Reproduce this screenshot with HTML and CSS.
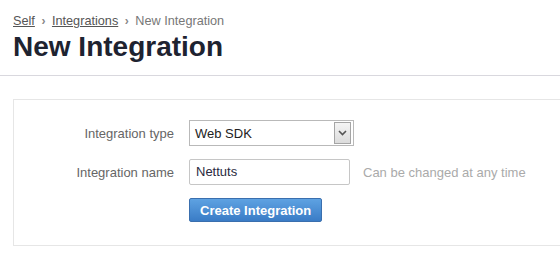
FILE: index.html
```html
<!DOCTYPE html>
<html lang="en">

<head>
    <meta charset="UTF-8">
    <title>New Integration</title>
    <link rel="stylesheet" href="styles.css">
</head>

<body>
    <header class="page-header">
        <div class="crumbs">
            <a href="#">Self</a>
            <span class="sep">›</span>
            <a href="#">Integrations</a>
            <span class="sep">›</span>
            <span class="current">New Integration</span>
        </div>
        <h1>New Integration</h1>
    </header>

    <section class="card">
        <form class="form">
            <div class="row">
                <label class="label">Integration type</label>
                <div class="select">
                    <span class="select-value">Web SDK</span>
                    <span class="select-btn">
                        <svg width="9" height="6" viewBox="0 0 9 6">
                            <path d="M1 1 L4.5 4.5 L8 1" fill="none" stroke="#555" stroke-width="1.6" />
                        </svg>
                    </span>
                </div>
            </div>
            <div class="row">
                <label class="label">Integration name</label>
                <div class="input">Nettuts</div>
                <span class="help">Can be changed at any time</span>
            </div>
            <div class="row">
                <span class="label"></span>
                <button type="button" class="btn">Create Integration</button>
            </div>
        </form>
    </section>
</body>

</html>
```

FILE: styles.css
```css
body {
    margin: 0;
    padding: 0;
    background-color: #ffffff;
    font-family: Arial, "Liberation Sans", sans-serif;
    color: #333;
}

.page-header {
    padding: 13px 13px 0 13px;
    height: 62px;
    border-bottom: 1px solid #d9d8de;
}

.crumbs {
    font-size: 12.7px;
    color: #777;
    line-height: 17px;
}

.crumbs a {
    color: #555;
    text-decoration: underline;
}

.sep {
    font-size: 12px;
    font-weight: bold;
    color: #888;
    margin: 0 3px;
}

.page-header h1 {
    margin: 1px 0 0 0;
    font-size: 28px;
    line-height: 32px;
    font-weight: bold;
    color: #1e2330;
}

.card {
    margin: 23px 0 0 13px;
    height: 145px;
    border: 1px solid #e6e6e6;
    border-right: none;
}

.form {
    padding-top: 20px;
    display: flex;
    flex-direction: column;
    gap: 13px;
}

.row {
    display: flex;
    align-items: center;
}

.label {
    width: 160px;
    text-align: right;
    font-size: 13px;
    color: #666;
    margin-right: 15px;
}

.select {
    width: 163px;
    height: 24px;
    border: 1px solid #b9b9b9;
    display: flex;
    align-items: center;
    justify-content: space-between;
    font-size: 13px;
    color: #222;
}

.select-value {
    padding-left: 5px;
}

.select-btn {
    width: 15px;
    height: 20px;
    margin-right: 2px;
    border: 1px solid #a5a5a5;
    background: linear-gradient(#f4f4f4, #dcdcdc);
    display: flex;
    align-items: center;
    justify-content: center;
}

.input {
    width: 153px;
    height: 24px;
    line-height: 24px;
    padding-left: 6px;
    border: 1px solid #c6c6c6;
    border-radius: 2px;
    font-size: 13px;
    color: #2a2a40;
}

.help {
    margin-left: 13px;
    font-size: 13px;
    color: #aaa;
}

.btn {
    height: 24px;
    padding: 0 10px;
    font-family: Arial, "Liberation Sans", sans-serif;
    font-size: 13px;
    font-weight: bold;
    color: #fff;
    background: linear-gradient(#5ea2e2, #3a7cc6);
    border: 1px solid #3a6fae;
    border-radius: 2px;
}
```
